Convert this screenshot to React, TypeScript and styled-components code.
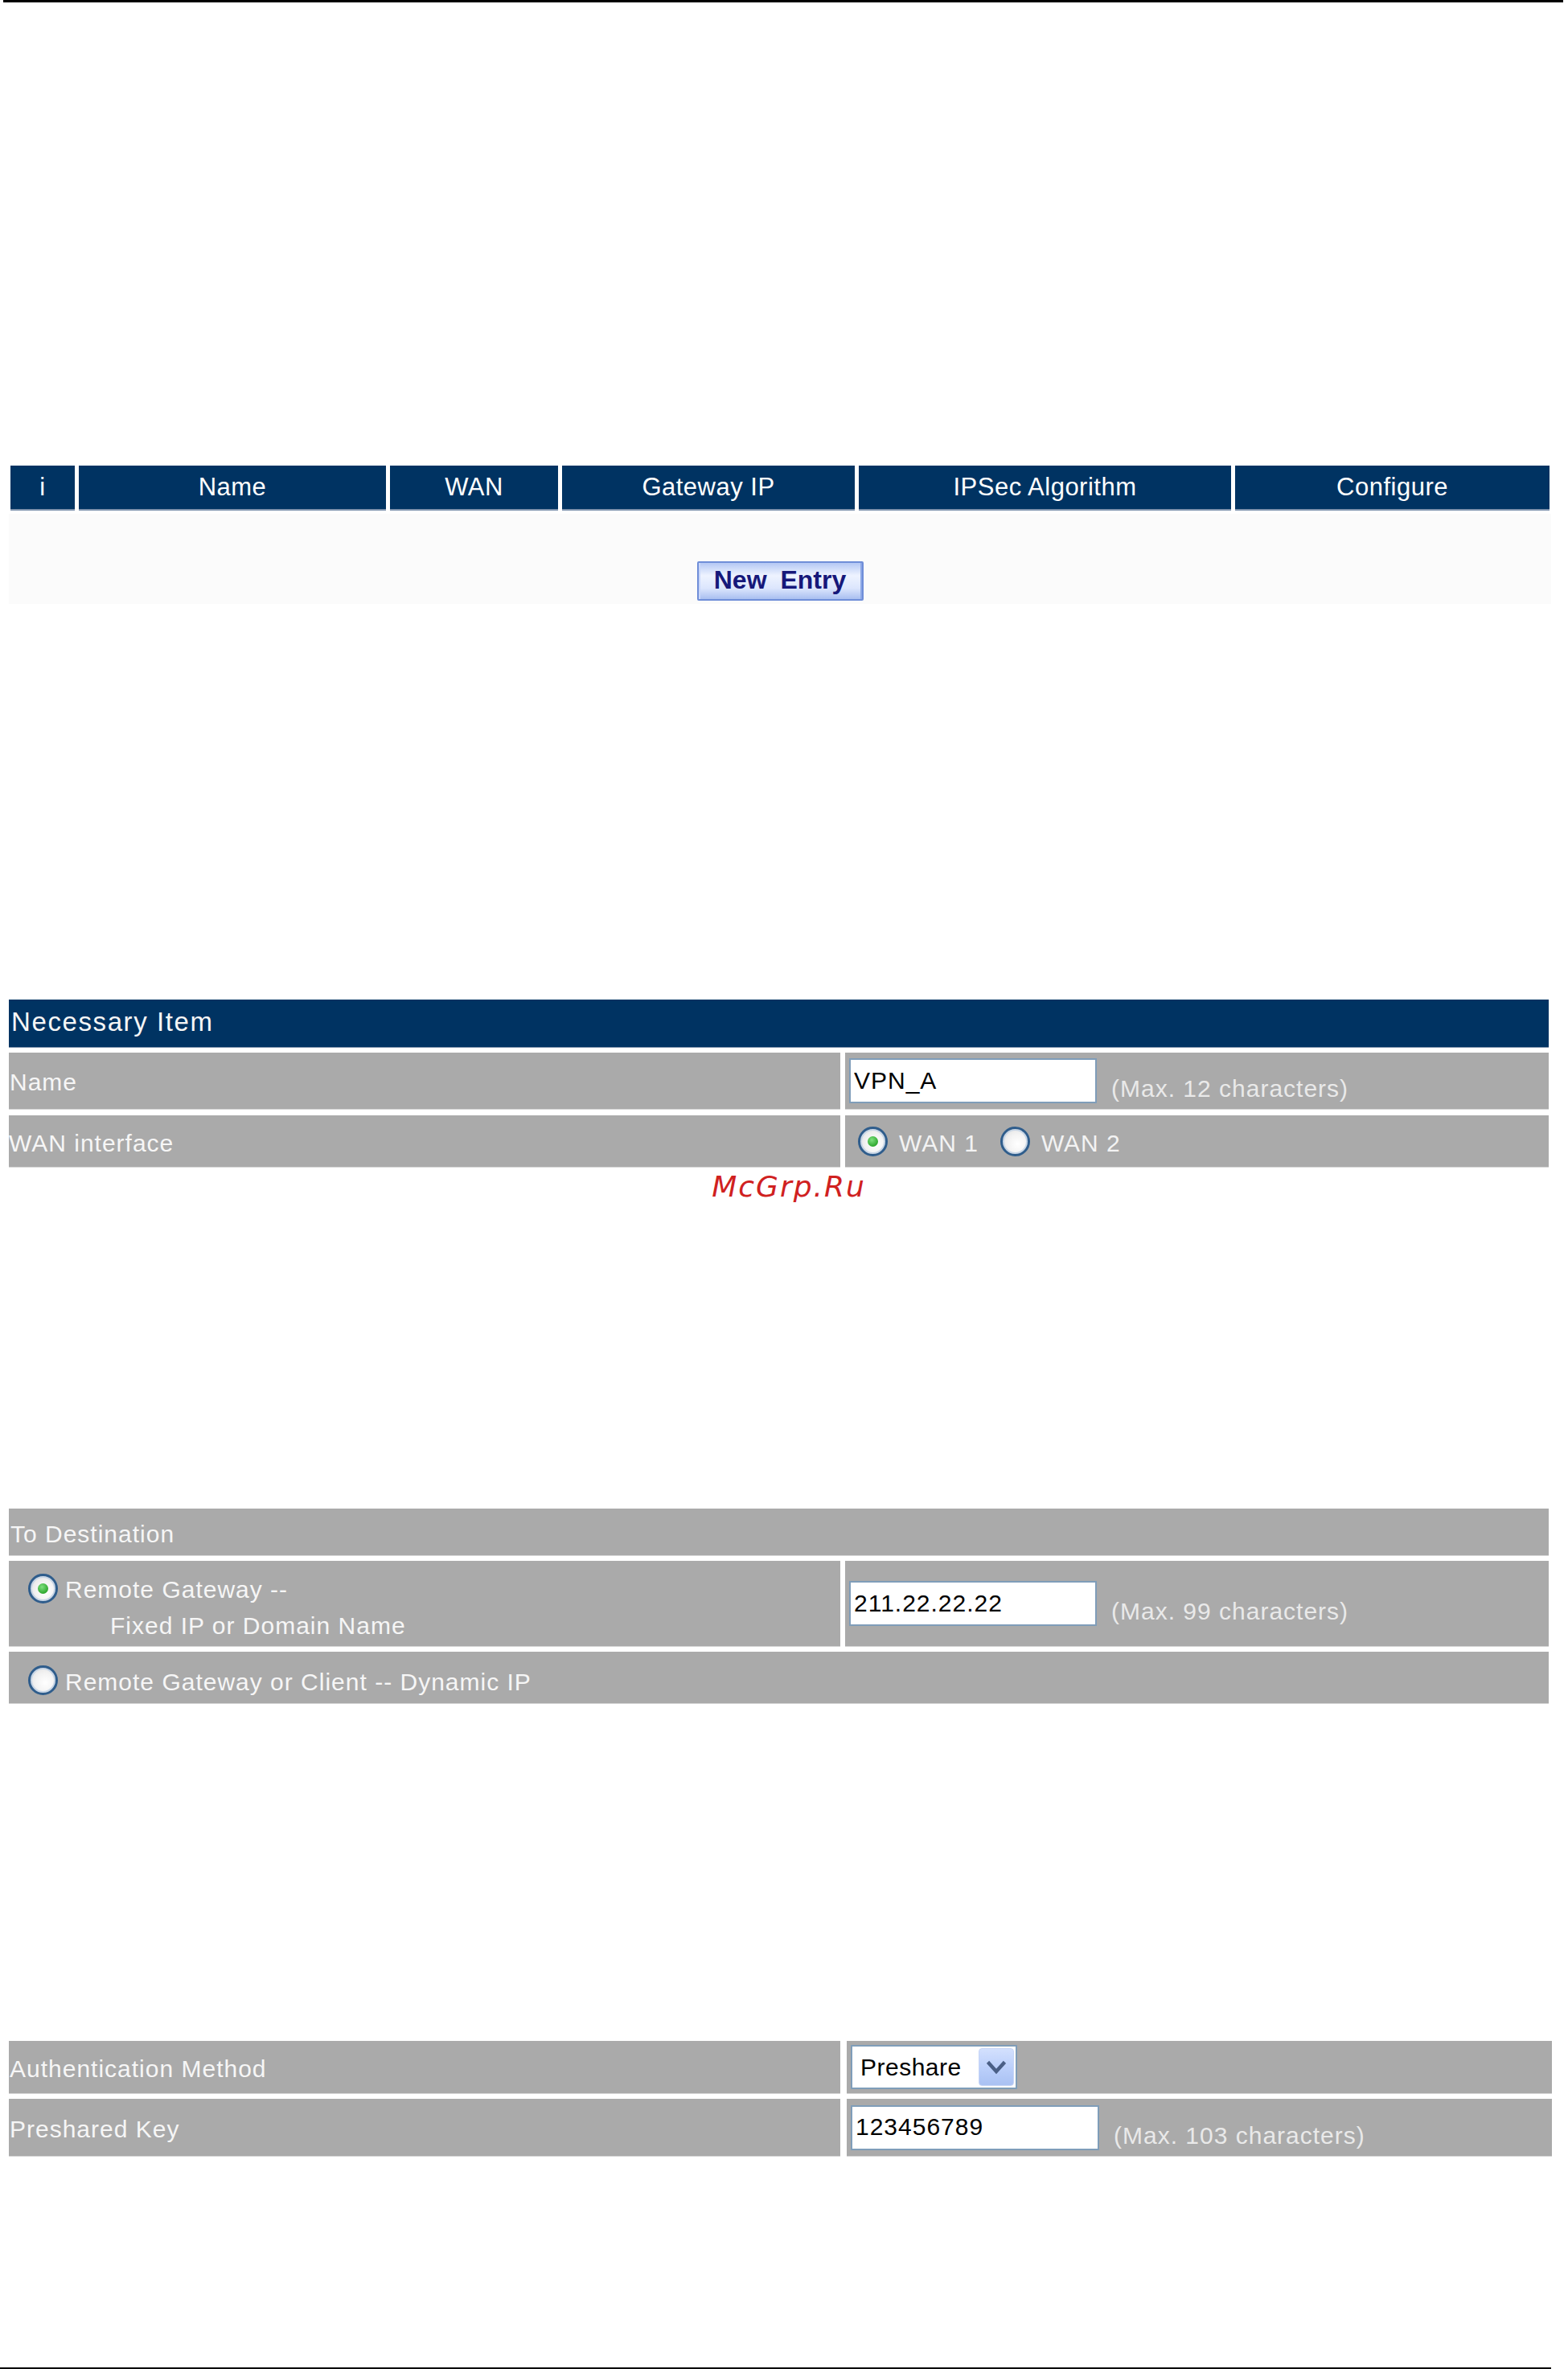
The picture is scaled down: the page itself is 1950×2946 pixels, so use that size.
import React from 'react';
import styled, { createGlobalStyle } from 'styled-components';

const GlobalStyle = createGlobalStyle`
  body {
    margin: 0;
    background: #ffffff;
    font-family: "Liberation Sans", Arial, sans-serif;
  }
`;

const NAVY = '#003362';
const GRAY = '#aaaaaa';

const Page = styled.div`
  width: 1950px;
  height: 2946px;
  display: flex;
  flex-direction: column;
`;

const Rule = styled.div<{ $top: number; $left: number; $right: number }>`
  height: 3px;
  background: #000;
  margin: ${(p) => p.$top}px ${(p) => p.$right}px 0 ${(p) => p.$left}px;
  flex: none;
`;

/* ---------- tunnel list ---------- */

const ListTable = styled.div`
  margin: 576px 0 0 11px;
  width: 1918px;
  display: flex;
  flex-direction: column;
  gap: 4px;
`;

const ListHead = styled.div`
  display: grid;
  grid-template-columns: 80px 382px 209px 364px 463px 391px;
  column-gap: 5px;
  padding-left: 2px;
`;

const HeadCell = styled.div`
  height: 54px;
  background: ${NAVY};
  border-bottom: 2px solid #7f93ad;
  color: #fff;
  font-size: 31px;
  letter-spacing: 0.5px;
  display: flex;
  align-items: center;
  justify-content: center;
`;

const EntryRow = styled.div`
  height: 112px;
  background: #fbfbfb;
  display: flex;
  justify-content: center;
  align-items: flex-end;
  padding-bottom: 4px;
  box-sizing: border-box;
`;

const NewEntryButton = styled.button`
  width: 207px;
  height: 49px;
  border: 2px solid #6f8ed8;
  border-radius: 2px;
  background: linear-gradient(to bottom, #b4c8f4 0%, #eef3ff 35%, #dce6fd 70%, #a9bff0 100%);
  box-shadow: inset 2px 0 0 #c9d7fa, inset -2px 0 0 #8ba7e6;
  color: #16187a;
  font-family: "Liberation Sans", Arial, sans-serif;
  font-weight: bold;
  font-size: 32px;
  word-spacing: 8px;
  padding: 0 0 2px;
  cursor: pointer;
`;

/* ---------- form tables ---------- */

const FormTable = styled.div<{ $top: number; $width: number }>`
  margin: ${(p) => p.$top}px 0 0 11px;
  width: ${(p) => p.$width}px;
  display: flex;
  flex-direction: column;
  gap: 6px;
`;

const FormHead = styled.div<{ $dark?: boolean; $h: number }>`
  height: ${(p) => p.$h}px;
  background: ${(p) => (p.$dark ? NAVY : GRAY)};
  border-bottom: 1px solid ${(p) => (p.$dark ? '#7f93ad' : '#d6d6d6')};
  box-sizing: border-box;
  color: #f6f6f6;
  font-size: ${(p) => (p.$dark ? 33 : 30)}px;
  letter-spacing: ${(p) => (p.$dark ? 1.6 : 1)}px;
  padding: ${(p) => (p.$dark ? '0 0 4px 3px' : '6px 0 0 2px')};
  display: flex;
  align-items: center;
`;

const FormRow = styled.div<{ $h: number; $gap?: number }>`
  height: ${(p) => p.$h}px;
  display: grid;
  grid-template-columns: 1034px 1fr;
  column-gap: ${(p) => p.$gap ?? 6}px;
`;

const WideRow = styled.div<{ $h: number }>`
  height: ${(p) => p.$h}px;
  background: ${GRAY};
  border-bottom: 1px solid #d6d6d6;
  box-sizing: border-box;
  display: flex;
  align-items: center;
  padding: 6px 0 0 24px;
  color: #f6f6f6;
  font-size: 30px;
  letter-spacing: 1px;
`;

const LabelCell = styled.div<{ $pad?: string }>`
  background: ${GRAY};
  border-bottom: 1px solid #d6d6d6;
  box-sizing: border-box;
  color: #f6f6f6;
  font-size: 30px;
  letter-spacing: 1px;
  padding: ${(p) => p.$pad ?? '4px 0 0 1px'};
  display: flex;
  align-items: center;
`;

const FieldCell = styled.div<{ $pad?: number }>`
  background: ${GRAY};
  border-bottom: 1px solid #d6d6d6;
  box-sizing: border-box;
  display: flex;
  align-items: center;
  padding-left: ${(p) => p.$pad ?? 5}px;
  color: #f3f3f3;
  font-size: 30px;
  letter-spacing: 1px;
`;

const TextBox = styled.input`
  width: 308px;
  height: 56px;
  box-sizing: border-box;
  border: 2px solid #7f9db9;
  background: #fff;
  color: #000;
  font-family: "Liberation Sans", Arial, sans-serif;
  font-size: 30px;
  letter-spacing: 1px;
  padding: 0 0 1px 4px;
  outline: none;
`;

const Hint = styled.span`
  margin: 20px 0 0 18px;
  color: #e9e9e9;
`;

const RadioMark = styled.span<{ $checked?: boolean }>`
  width: 37px;
  height: 37px;
  box-sizing: border-box;
  border-radius: 50%;
  border: 3px solid #2f5d8c;
  background: radial-gradient(circle at 60% 60%, #ffffff 0%, #f3f3f3 45%, #dcdcdc 100%);
  box-shadow: inset 0 0 0 2px #c8d6e6;
  display: inline-flex;
  align-items: center;
  justify-content: center;
  flex: none;

  &::after {
    content: '';
    width: 13px;
    height: 13px;
    border-radius: 50%;
    background: radial-gradient(circle at 40% 35%, #7ee07e 0%, #2fa82f 70%, #1d8a1d 100%);
    display: ${(p) => (p.$checked ? 'block' : 'none')};
  }
`;

const RadioOption = styled.label<{ $gap: number; $after?: number }>`
  display: inline-flex;
  align-items: center;
  gap: ${(p) => p.$gap}px;
  margin-right: ${(p) => p.$after ?? 0}px;
  cursor: pointer;
`;

const RadioText = styled.span`
  padding-top: 6px;
`;

const StackedOption = styled.div`
  display: flex;
  align-items: flex-start;
  gap: 9px;
`;

const StackedText = styled.div`
  display: flex;
  flex-direction: column;
  line-height: 45px;
  margin-top: -3px;
`;

const Indented = styled.span`
  padding-left: 56px;
`;

const SelectBox = styled.div`
  width: 207px;
  height: 55px;
  box-sizing: border-box;
  border: 2px solid #7f9db9;
  background: #fff;
  display: flex;
  align-items: center;
  justify-content: space-between;
  padding: 0 2px 0 10px;
  color: #000;
  font-size: 30px;
  letter-spacing: 0.5px;
`;

const SelectArrow = styled.span`
  width: 44px;
  height: 47px;
  border-radius: 4px;
  background: linear-gradient(to bottom, #d3e0fd 0%, #bcd0fb 50%, #a9c1f3 100%);
  border: 1px solid #c6d5f6;
  box-sizing: border-box;
  display: flex;
  align-items: center;
  justify-content: center;
`;

const Watermark = styled.div`
  margin-top: 4px;
  height: 40px;
  line-height: 40px;
  text-align: center;
  padding-left: 12px;
  color: #d0211f;
  font-family: "DejaVu Sans", Verdana, sans-serif;
  font-style: italic;
  font-size: 36px;
  letter-spacing: 2px;
`;

const ChevronDown = () => (
  <svg width="24" height="18" viewBox="0 0 24 18">
    <path d="M3 4 L12 14 L21 4" fill="none" stroke="#4a5f86" strokeWidth="4.5" strokeLinecap="square" />
  </svg>
);

const listColumns = ['i', 'Name', 'WAN', 'Gateway IP', 'IPSec Algorithm', 'Configure'];

const App: React.FC = () => {
  return (
    <Page>
      <GlobalStyle />
      <Rule $top={0} $left={4} $right={6} />

      <ListTable>
        <ListHead>
          {listColumns.map((c) => (
            <HeadCell key={c}>{c}</HeadCell>
          ))}
        </ListHead>
        <EntryRow>
          <NewEntryButton type="button">New Entry</NewEntryButton>
        </EntryRow>
      </ListTable>

      <FormTable $top={492} $width={1915}>
        <FormHead $dark $h={60}>Necessary Item</FormHead>
        <FormRow $h={71}>
          <LabelCell>Name</LabelCell>
          <FieldCell>
            <TextBox readOnly defaultValue="VPN_A" />
            <Hint>(Max. 12 characters)</Hint>
          </FieldCell>
        </FormRow>
        <FormRow $h={65} style={{ marginTop: 1 }}>
          <LabelCell $pad="6px 0 0 0">WAN interface</LabelCell>
          <FieldCell $pad={16}>
            <RadioOption $gap={14} $after={27}>
              <RadioMark $checked />
              <RadioText>WAN 1</RadioText>
            </RadioOption>
            <RadioOption $gap={14}>
              <RadioMark />
              <RadioText>WAN 2</RadioText>
            </RadioOption>
          </FieldCell>
        </FormRow>
      </FormTable>

      <Watermark>McGrp.Ru</Watermark>

      <FormTable $top={380} $width={1915}>
        <FormHead $h={59}>To Destination</FormHead>
        <FormRow $h={107}>
          <LabelCell $pad="16px 0 0 24px" style={{ alignItems: 'flex-start' }}>
            <StackedOption>
              <RadioMark $checked />
              <StackedText>
                <span>Remote Gateway --</span>
                <Indented>Fixed IP or Domain Name</Indented>
              </StackedText>
            </StackedOption>
          </LabelCell>
          <FieldCell>
            <TextBox readOnly defaultValue="211.22.22.22" />
            <Hint>(Max. 99 characters)</Hint>
          </FieldCell>
        </FormRow>
        <WideRow $h={65}>
          <RadioOption $gap={9}>
            <RadioMark />
            <RadioText>Remote Gateway or Client -- Dynamic IP</RadioText>
          </RadioOption>
        </WideRow>
      </FormTable>

      <FormTable $top={419} $width={1919}>
        <FormRow $h={66} $gap={8}>
          <LabelCell>Authentication Method</LabelCell>
          <FieldCell>
            <SelectBox>
              <span>Preshare</span>
              <SelectArrow>
                <ChevronDown />
              </SelectArrow>
            </SelectBox>
          </FieldCell>
        </FormRow>
        <FormRow $h={72} $gap={8}>
          <LabelCell>Preshared Key</LabelCell>
          <FieldCell>
            <TextBox readOnly defaultValue="123456789" style={{ width: 309 }} />
            <Hint>(Max. 103 characters)</Hint>
          </FieldCell>
        </FormRow>
      </FormTable>

      <Rule $top={262} $left={0} $right={21} />
    </Page>
  );
};

export default App;
